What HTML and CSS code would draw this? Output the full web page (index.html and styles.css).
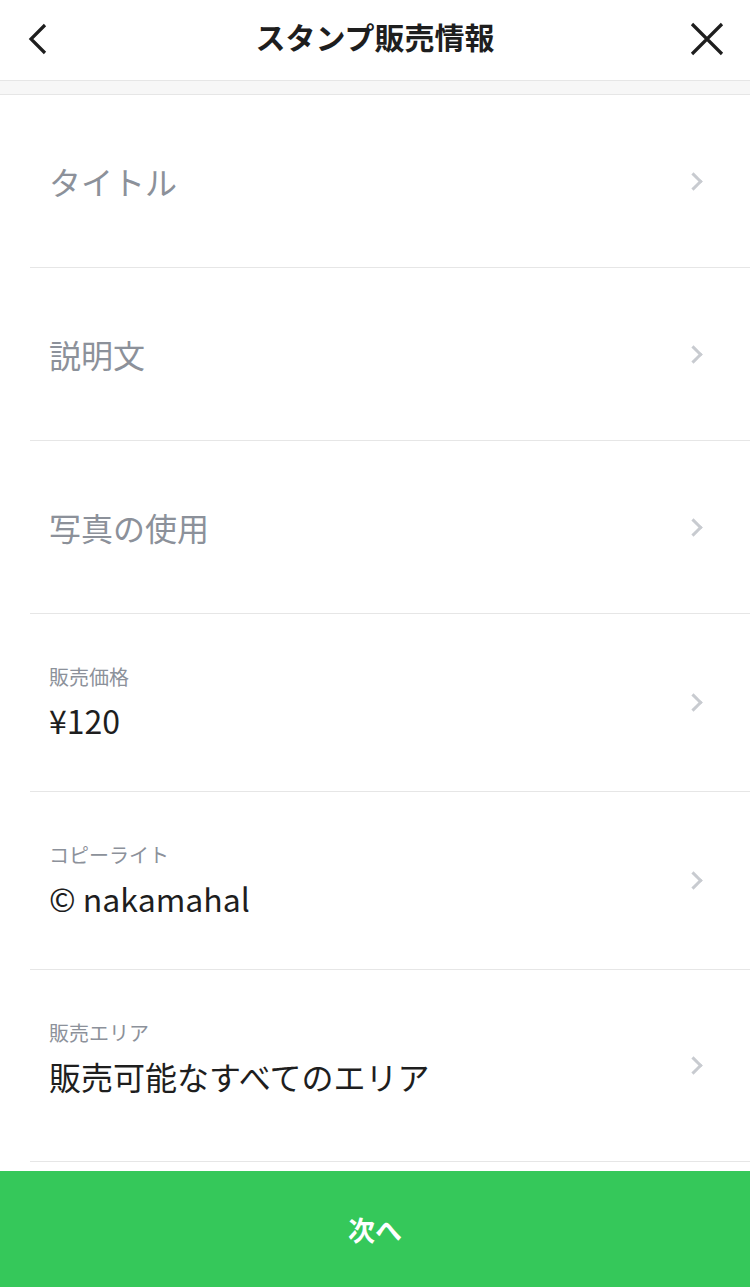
FILE: index.html
```html
<!DOCTYPE html>
<html lang="ja">
<head>
    <meta charset="UTF-8">
    <title>スタンプ販売情報</title>
    <link rel="stylesheet" href="styles.css">
</head>
<body>

<div class="header">
    <button class="icon-btn back">
        <svg width="24" height="34" viewBox="0 0 24 34"><path d="M19 3 L5 17 L19 31" fill="none" stroke="#1e1e1e" stroke-width="3.2"/></svg>
    </button>
    <h1>スタンプ販売情報</h1>
    <button class="icon-btn close">
        <svg width="34" height="34" viewBox="0 0 34 34"><path d="M2 2 L32 32 M32 2 L2 32" fill="none" stroke="#1e1e1e" stroke-width="3.2"/></svg>
    </button>
</div>
<div class="band"></div>

<div class="list">
    <div class="row">
        <div class="text"><div class="placeholder">タイトル</div></div>
        <span class="chevron"></span>
    </div>
    <div class="row">
        <div class="text"><div class="placeholder">説明文</div></div>
        <span class="chevron"></span>
    </div>
    <div class="row">
        <div class="text"><div class="placeholder">写真の使用</div></div>
        <span class="chevron"></span>
    </div>
    <div class="row filled">
        <div class="text">
            <div class="label">販売価格</div>
            <div class="value">¥120</div>
        </div>
        <span class="chevron"></span>
    </div>
    <div class="row filled">
        <div class="text">
            <div class="label">コピーライト</div>
            <div class="value">© nakamahal</div>
        </div>
        <span class="chevron"></span>
    </div>
    <div class="row filled last">
        <div class="text">
            <div class="label">販売エリア</div>
            <div class="value">販売可能なすべてのエリア</div>
        </div>
        <span class="chevron"></span>
    </div>
</div>

<button class="next">次へ</button>

</body>
</html>
```

FILE: styles.css
```css
body {
    margin: 0;
    font-family: "Noto Sans CJK JP", "Noto Sans", sans-serif;
    background-color: white;
    color: #1e1e1e;
}
.header {
    height: 80px;
    display: grid;
    grid-template-columns: 1fr auto 1fr;
    align-items: center;
    padding: 0 26px;
    border-bottom: 1px solid #e6e6e6;
    box-sizing: border-box;
    height: 81px;
}
.header h1 {
    margin: 0 0 8px;
    font-size: 30px;
    font-weight: bold;
}
.icon-btn {
    background: none;
    border: none;
    padding: 0;
    display: flex;
    margin-bottom: 3px;
}
.close {
    justify-self: end;
}
.band {
    height: 13px;
    background-color: #f7f7f7;
    border-bottom: 1px solid #e6e6e6;
}
.list {
    padding-left: 30px;
}
.row {
    display: flex;
    align-items: center;
    height: 172px;
    padding: 0 50px 0 19px;
    border-bottom: 1px solid #e6e6e6;
}
.row.filled {
    height: 177px;
}
.row.last {
    height: 191px;
}
.row.last .text {
    margin-top: -14px;
}
.text {
    flex: 1;
}
.placeholder {
    font-size: 32px;
    color: #8c919a;
}
.label {
    font-size: 20px;
    color: #8c919a;
    margin-bottom: 6px;
}
.value {
    font-size: 32px;
}
.chevron {
    width: 10px;
    height: 10px;
    border-top: 3px solid #c8cbd0;
    border-right: 3px solid #c8cbd0;
    transform: rotate(45deg);
}
.next {
    position: fixed;
    left: 0;
    right: 0;
    bottom: 0;
    height: 116px;
    width: 100%;
    border: none;
    background-color: #35c85a;
    color: white;
    font-family: inherit;
    font-size: 27px;
    font-weight: bold;
}
```
